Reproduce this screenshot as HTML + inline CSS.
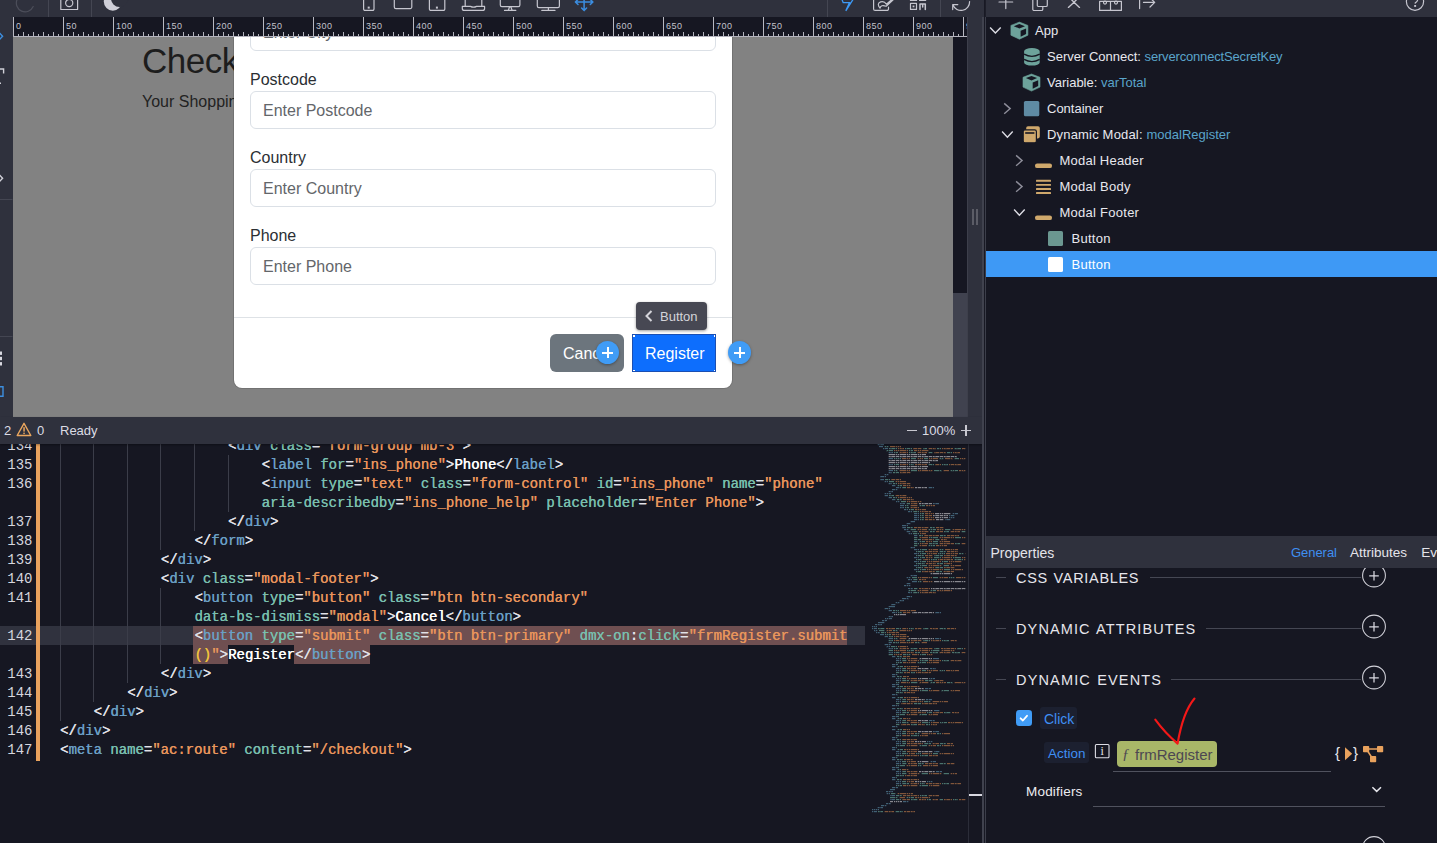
<!DOCTYPE html>
<html lang="en">
<head>
<meta charset="utf-8">
<title>Wappler</title>
<style>
*{box-sizing:border-box;margin:0;padding:0}
html,body{width:1437px;height:843px;overflow:hidden;background:#161722}
body{position:relative;font-family:"Liberation Sans",sans-serif;font-size:13px;color:#e4e4ea}
.abs{position:absolute}
svg{display:block;overflow:visible}
/* top bars */
#tbL{left:0;top:0;width:985px;height:17px;background:#2f313d;overflow:hidden}
#tbR{left:985px;top:0;width:452px;height:17px;background:#2f313d;overflow:hidden}
#strip{left:0;top:17px;width:13px;height:400px;background:#2f313d;overflow:hidden}
#ruler{left:13px;top:17px;width:954px;height:20px;background:#161722;overflow:hidden}
#canvas{left:13px;top:37px;width:940px;height:380px;background:#828282;overflow:hidden}
#vsb{left:953px;top:37px;width:14px;height:380px;background:#161722}
#vsb i{position:absolute;left:0;top:256px;width:14px;height:124px;background:#40424f}
#split{left:967px;top:17px;width:18px;height:426px;background:#2f313d}
#status{left:0;top:417px;width:985px;height:27px;background:#2f313d;z-index:2;box-shadow:0 1px 2px rgba(0,0,0,.35)}
#code{left:0;top:443px;width:985px;height:400px;background:#161722;overflow:hidden}
#panel{background:#161722;overflow:hidden}

/* canvas content */
#canvas .h1{left:129px;top:1.5px;font-size:35px;line-height:44px;color:#1d1d1d;white-space:nowrap;letter-spacing:-.5px}
#canvas .lead{left:129px;top:56px;font-size:16px;line-height:18px;color:#222;white-space:nowrap}
#modal{left:221px;top:-20px;width:498px;height:371px;background:#fff;border-radius:8px;box-shadow:0 0 0 1px rgba(0,0,0,.12)}
#modal .lb{position:absolute;left:16px;font-size:16px;line-height:22px;color:#2b2f33;white-space:nowrap}
#modal .in{position:absolute;left:16px;width:466px;height:38px;border:1px solid #dbe0e6;border-radius:6px;font-size:16px;line-height:38px;padding-left:12px;color:#63666a;white-space:nowrap}
#modal .hr{position:absolute;left:0;top:300px;width:498px;height:1px;background:#dee2e6}
.btn{position:absolute;height:38px;font-size:16px;line-height:39.5px;color:#fff;text-align:left;white-space:nowrap;overflow:hidden}
#bCancel{left:316px;top:317px;width:74px;background:#6c757d;border-radius:6px;padding-left:13px}
#bReg{left:398px;top:317px;width:84px;height:38px;background:#0d6efd;padding-left:13px;line-height:39.5px;box-shadow:0 0 0 1px #1a4fb3 inset}
#bReg i{position:absolute;width:1.5px;height:1.5px;background:#fff}
.plus{position:absolute;width:23px;height:23px;border-radius:50%;background:#409cf6;box-shadow:0 1px 3px rgba(0,0,0,.35)}
.plus:before,.plus:after{content:"";position:absolute;background:#fff}
.plus:before{left:6px;top:10.5px;width:11px;height:2px}
.plus:after{left:10.5px;top:6px;width:2px;height:11px}
#tip{left:402px;top:285px;width:71px;height:28px;border-radius:4px;background:#474853;color:#d4d4da;font-size:13px;line-height:29px;padding-left:24px;box-shadow:0 1px 3px rgba(0,0,0,.4);white-space:nowrap}
#tip svg{position:absolute;left:9px;top:8px}

/* status */
#status{font-size:13px;line-height:28px;color:#dcdce4}
#status span{position:absolute;top:0;white-space:nowrap}
/* code */
#code{font-family:"Liberation Mono",monospace;font-size:14px;line-height:19px;color:#dedee4}
#code .ln{position:absolute;left:0;width:32.5px;text-align:right;color:#d6d6de;white-space:pre;line-height:21px;height:19px}
#code .cl{position:absolute;white-space:pre;height:19px;line-height:21px;letter-spacing:-.03px;text-shadow:.3px 0 0 currentColor}
#code .g{position:absolute;width:1px;height:19px;background:#3b3d49}
#code .obar{position:absolute;left:36px;width:3.5px;background:#e9a25d}
#code .band{position:absolute;left:0;width:865px;height:19px;background:#30323e}
#code .sel{position:absolute;height:19px;background:#6f4f51}
#code .mm{position:absolute;left:870px;top:0}
.p{color:#e2e2e8}.t{color:#6a9fc4}.a{color:#79bfae}.s{color:#e8955c}.x{color:#fff;text-shadow:.5px 0 0 #fff}.y{color:#f0c23c}
#code .vl{position:absolute;top:0;width:1px;height:400px}

/* panel */
#panel{left:986px;top:17px;width:451px;height:826px;border-left:0}
#panel .selrow{position:absolute;left:0;width:451px;height:26px;background:#3e99f5}
#panel .tr{position:absolute;height:26px;line-height:26px;font-size:13px;color:#e8e8ee;white-space:nowrap}
#panel .tr b{font-weight:normal;color:#5aa5cb;letter-spacing:-.15px}
#panel .ph{position:absolute;left:0;width:451px;height:32px;background:#2f313d;font-size:14px;line-height:34px;color:#e4e4ea;z-index:4}
#panel .ph span{position:absolute;top:0;white-space:nowrap}
#panel .ph .tg{font-size:13px;letter-spacing:-.05px}
#panel .ph .ta{font-size:13.5px}
#panel .sh{position:absolute;font-size:14.5px;word-spacing:1px;line-height:20px;height:20px;color:#e6e6ec;white-space:nowrap}
#panel .hl{position:absolute;height:1px;background:#454753}
#panel .bdg{position:absolute;background:#1c2030;border-radius:3px;color:#3f8ff5;white-space:nowrap}
#panel .inf{width:13.6px;height:13.2px;font-family:"Liberation Serif",serif;font-size:12px;line-height:13px;text-align:center;color:#e4e4ea}
#panel .pill{position:absolute;width:100px;height:26px;border-radius:4px;background:#a9b768;color:#4d4752;font-size:15px;line-height:27px;padding-left:18px;white-space:nowrap}
#panel .pill em{position:absolute;left:5px;top:0;font-family:"Liberation Serif",serif;font-style:italic;font-size:15px}
#panel .brc{font-size:15px;line-height:18px;color:#e8e8ee}
#panel .mod{letter-spacing:.2px;font-size:13.5px;line-height:18px;color:#ececf0}
</style>
</head>
<body>
<div id="tbL" class="abs"><svg width="985" height="17" viewBox="0 0 985 17" fill="none" stroke="#c6c6cf" stroke-width="1.2" stroke-linecap="round" stroke-linejoin="round">
<g stroke="#444652" stroke-width="1"><path d="M48.5 0V17M91.5 0V17M827.5 0V17M940.5 0V17"/></g>
<path d="M33.2 6.6A8.6 8.6 0 0 1 17.1 -0.5" stroke="#4c4e5a"/>
<path d="M60.8 0V9.5H77.6V0"/><circle cx="69.2" cy="3" r="3.6"/>
<circle cx="112.8" cy="1.7" r="9" fill="#cfcfd8" stroke="none"/><circle cx="119.6" cy="-1.6" r="8.6" fill="#2f313d" stroke="none"/>
<path d="M363.6 0V9A1.4 1.4 0 0 0 365 10.4H372.6A1.4 1.4 0 0 0 374 9V0"/><rect x="367.7" y="6.6" width="2" height="2" fill="#c6c6cf" stroke="none"/>
<path d="M394.3 0V7A1.6 1.6 0 0 0 395.9 8.6H410.2A1.6 1.6 0 0 0 411.8 7V0"/>
<path d="M429.4 0V9A1.4 1.4 0 0 0 430.8 10.4H443.4A1.4 1.4 0 0 0 444.8 9V0"/><rect x="435.9" y="6.6" width="2" height="2" fill="#c6c6cf" stroke="none"/>
<path d="M465.2 0V6.3M481.8 0V6.3M462.3 6.4H470.5Q473.5 8 476.5 6.4H484.6V8.4A2 2 0 0 1 482.6 10.4H464.3A2 2 0 0 1 462.3 8.4Z"/>
<path d="M500.3 0V5A1.6 1.6 0 0 0 501.9 6.6H518.3A1.6 1.6 0 0 0 519.9 5V0M504.5 10.4H515.8M508.3 10.2L509.6 6.8H510.8L512.1 10.2"/>
<path d="M537.3 0V6A1.6 1.6 0 0 0 538.9 7.6H557.8A1.6 1.6 0 0 0 559.4 6V0M548.4 7.6V10.4M541.8 10.4H555"/>
<g stroke="#3b8de0" stroke-width="1.5"><path d="M575.5 2H592.8M584.1 -4V10.5M578 -0.5L575.4 2L578 4.5M590.3 -0.5L592.9 2L590.3 4.5M581.6 8L584.1 10.6L586.6 8"/></g>
<path d="M841.8 -1L843.2 2.7H849.4L845.8 10.8L853 -0.5" stroke="#3d99f5" stroke-width="1.3" fill="none" stroke-linejoin="miter" stroke-linecap="butt"/>
<path d="M873.6 0V8.9A1.5 1.5 0 0 0 875.1 10.4H887A1.5 1.5 0 0 0 888.5 8.9V7.2M880 8.2Q876.4 3.4 880.6 1.9Q884.3 0.8 886.4 4.2L893 -1.5M880 8.2Q880.8 4.2 886.2 6.2L893.5 -0.5"/>
<rect x="910.5" y="3.4" width="6" height="6"/><rect x="912.6" y="5.5" width="1.8" height="1.8" fill="#c6c6cf" stroke="none"/><path d="M920 9.4V4H925.3V9.4M922.7 4V7" stroke-width="1.5"/><path d="M910.5 -2V0.4H916.5V-2M919.6 -2V0.4H925.6V-2"/>
<path d="M969.6 1.5A8.6 8.6 0 0 1 953 5M952.7 9.6V4.6H957.8"/>
</svg></div>
<div id="tbR" class="abs"><svg width="452" height="17" viewBox="985 0 452 17" fill="none" stroke="#c6c6cf" stroke-width="1.2" stroke-linecap="round" stroke-linejoin="round">
<rect x="984.5" y="0" width="1.5" height="17" fill="#1d1e29" stroke="none"/>
<path d="M999 2H1012.7M1005.8 -3V8.6"/>
<path d="M1037.3 0V5.2A1.3 1.3 0 0 0 1038.6 6.5H1046A1.3 1.3 0 0 0 1047.3 5.2V0M1032.8 0V9.2A1.3 1.3 0 0 0 1034.1 10.5H1041.5A1.3 1.3 0 0 0 1042.8 9.2V6.5"/>
<path d="M1068.4 7.4L1074 2.2L1077.6 -1.5M1079.5 7.4L1074 2.2L1070.4 -1.5" stroke-width="1.35"/>
<path d="M1099.6 1.4H1121.4V10.4H1099.6ZM1110.5 1.4V10.4"/><circle cx="1105" cy="2.6" r="1.5"/><circle cx="1116" cy="2.6" r="1.5"/>
<path d="M1139.6 0V8.6M1143.5 2.4H1154.5M1150 -2.2L1154.7 2.4L1150 7"/>
<circle cx="1415" cy="1.7" r="8.6"/><path d="M1412.6 -1Q1415.5 -3.5 1417.6 -1Q1418.3 0.5 1415.2 3" /><rect x="1414.2" y="5" width="1.9" height="1.9" fill="#c6c6cf" stroke="none"/>
</svg></div>
<div id="strip" class="abs"><svg width="13" height="400" viewBox="0 17 13 400" fill="none" stroke-width="1.4">
<path d="M-1 32.5L2.6 36.2L-1 40" stroke="#3d8fe0"/>
<path d="M-1 69H3.6V73.5" stroke="#d0d0d8"/><path d="M-1 83.2H1" stroke="#d0d0d8"/>
<path d="M-1 174.5L2.6 178.2L-1 182" stroke="#d0d0d8"/>
<path d="M0 199.5H12.5M0 336.5H12.5" stroke="#444652" stroke-width="1"/>
<g fill="#d8d8e0" stroke="none"><rect x="0" y="351.5" width="2" height="3.4"/><rect x="0" y="356.8" width="2" height="3.4"/><rect x="0" y="362.1" width="2" height="3.4"/></g>
<path d="M-1 386.7H3V396.3H-1" stroke="#3d8fe0"/>
</svg></div>
<div id="ruler" class="abs"><svg width="954" height="20" viewBox="0 0 954 20">
<defs><pattern id="tk" x="0" y="0" width="50" height="20" patternUnits="userSpaceOnUse">
<rect x="0" y="0" width="1" height="20" fill="#b9b9c2"/>
<g fill="#b4b4be"><rect x="5" y="17" width="1" height="2"/><rect x="10" y="15" width="1" height="4"/><rect x="15" y="17" width="1" height="2"/><rect x="20" y="15" width="1" height="4"/><rect x="25" y="17" width="1" height="2"/><rect x="30" y="15" width="1" height="4"/><rect x="35" y="17" width="1" height="2"/><rect x="40" y="15" width="1" height="4"/><rect x="45" y="17" width="1" height="2"/></g>
</pattern></defs>
<rect width="954" height="20" fill="url(#tk)"/>
<rect x="0" y="19" width="954" height="1" fill="#b4b4be"/>
<g font-family="Liberation Sans, sans-serif" font-size="9" letter-spacing="0.5" fill="#c2c2cb"><text x="3" y="12">0</text><text x="53" y="12">50</text><text x="103" y="12">100</text><text x="153" y="12">150</text><text x="203" y="12">200</text><text x="253" y="12">250</text><text x="303" y="12">300</text><text x="353" y="12">350</text><text x="403" y="12">400</text><text x="453" y="12">450</text><text x="503" y="12">500</text><text x="553" y="12">550</text><text x="603" y="12">600</text><text x="653" y="12">650</text><text x="703" y="12">700</text><text x="753" y="12">750</text><text x="803" y="12">800</text><text x="853" y="12">850</text><text x="903" y="12">900</text><text x="953" y="12">950</text></g>
</svg></div>
<div id="canvas" class="abs">
<div class="abs h1">Checkout</div>
<div class="abs lead">Your Shopping Cart</div>
<div id="modal" class="abs">
<div class="in" style="top:-4px">Enter City</div>
<div class="lb" style="top:52px">Postcode</div>
<div class="in" style="top:74px">Enter Postcode</div>
<div class="lb" style="top:130px">Country</div>
<div class="in" style="top:152px">Enter Country</div>
<div class="lb" style="top:208px">Phone</div>
<div class="in" style="top:230px">Enter Phone</div>
<div class="hr"></div>
<div id="bCancel" class="btn">Cancel</div>
<div id="bReg" class="btn">Register<i style="left:1px;top:1px"></i><i style="right:1px;top:1px"></i><i style="left:1px;bottom:1px"></i><i style="right:1px;bottom:1px"></i></div>
<div class="plus" style="left:362px;top:324px"></div>
<div id="tip" class="abs"><svg width="8" height="12" viewBox="0 0 8 12"><path d="M6.5 1 L1.5 6 L6.5 11" fill="none" stroke="#d4d4da" stroke-width="2"/></svg>Button</div>
</div>
<div class="plus" style="left:715px;top:304px"></div>
</div>
<div id="vsb" class="abs"><i></i></div>
<div id="split" class="abs"><i class="abs" style="left:5px;top:192px;width:2.2px;height:16px;background:#5b5c66"></i><i class="abs" style="left:9px;top:192px;width:2.2px;height:16px;background:#5b5c66"></i><i class="abs" style="left:0;top:0;width:1px;height:400px;background:#3d3f4b"></i></div>
<i class="abs" style="left:982px;top:17px;width:2px;height:826px;background:#40424e;z-index:5"></i><i class="abs" style="left:984px;top:0;width:1px;height:843px;background:#181924;z-index:5"></i><i class="abs" style="left:985px;top:17px;width:1px;height:826px;background:#3c3e4a;z-index:5"></i>
<div id="status" class="abs"><span style="left:4px">2</span><svg class="abs" style="left:16px;top:5px" width="16" height="15" viewBox="0 0 16 15"><path d="M8 1.3L14.8 13.5H1.2Z" fill="none" stroke="#eaa65e" stroke-width="1.4" stroke-linejoin="round"/><rect x="7.3" y="5.2" width="1.5" height="4.4" fill="#eaa65e"/><rect x="7.3" y="10.6" width="1.5" height="1.5" fill="#eaa65e"/></svg><span style="left:37px">0</span><span style="left:60px">Ready</span>
<span style="left:922px">100%</span><i class="abs" style="left:907px;top:13px;width:10px;height:1.2px;background:#c8c8d0"></i><i class="abs" style="left:961px;top:13px;width:10px;height:1.2px;background:#c8c8d0"></i><i class="abs" style="left:965.4px;top:8px;width:1.2px;height:11px;background:#c8c8d0"></i></div>
<div id="code" class="abs">
<div class="band" style="top:183px"></div>
<div class="sel" style="top:183px;left:193px;width:654.4px"></div>
<div class="sel" style="top:202px;left:193px;width:34.6px"></div>
<div class="sel" style="top:202px;left:294.3px;width:75.8px"></div>
<i class="g" style="left:59.5px;top:-7px"></i>
<i class="g" style="left:93.1px;top:-7px"></i>
<i class="g" style="left:126.7px;top:-7px"></i>
<i class="g" style="left:160.3px;top:-7px"></i>
<i class="g" style="left:193.9px;top:-7px"></i>
<i class="g" style="left:59.5px;top:12px"></i>
<i class="g" style="left:93.1px;top:12px"></i>
<i class="g" style="left:126.7px;top:12px"></i>
<i class="g" style="left:160.3px;top:12px"></i>
<i class="g" style="left:193.9px;top:12px"></i>
<i class="g" style="left:227.5px;top:12px"></i>
<i class="g" style="left:59.5px;top:31px"></i>
<i class="g" style="left:93.1px;top:31px"></i>
<i class="g" style="left:126.7px;top:31px"></i>
<i class="g" style="left:160.3px;top:31px"></i>
<i class="g" style="left:193.9px;top:31px"></i>
<i class="g" style="left:227.5px;top:31px"></i>
<i class="g" style="left:59.5px;top:50px"></i>
<i class="g" style="left:93.1px;top:50px"></i>
<i class="g" style="left:126.7px;top:50px"></i>
<i class="g" style="left:160.3px;top:50px"></i>
<i class="g" style="left:193.9px;top:50px"></i>
<i class="g" style="left:227.5px;top:50px"></i>
<i class="g" style="left:59.5px;top:69px"></i>
<i class="g" style="left:93.1px;top:69px"></i>
<i class="g" style="left:126.7px;top:69px"></i>
<i class="g" style="left:160.3px;top:69px"></i>
<i class="g" style="left:193.9px;top:69px"></i>
<i class="g" style="left:59.5px;top:88px"></i>
<i class="g" style="left:93.1px;top:88px"></i>
<i class="g" style="left:126.7px;top:88px"></i>
<i class="g" style="left:160.3px;top:88px"></i>
<i class="g" style="left:59.5px;top:107px"></i>
<i class="g" style="left:93.1px;top:107px"></i>
<i class="g" style="left:126.7px;top:107px"></i>
<i class="g" style="left:59.5px;top:126px"></i>
<i class="g" style="left:93.1px;top:126px"></i>
<i class="g" style="left:126.7px;top:126px"></i>
<i class="g" style="left:59.5px;top:145px"></i>
<i class="g" style="left:93.1px;top:145px"></i>
<i class="g" style="left:126.7px;top:145px"></i>
<i class="g" style="left:160.3px;top:145px"></i>
<i class="g" style="left:59.5px;top:164px"></i>
<i class="g" style="left:93.1px;top:164px"></i>
<i class="g" style="left:126.7px;top:164px"></i>
<i class="g" style="left:160.3px;top:164px"></i>
<i class="g" style="left:59.5px;top:183px"></i>
<i class="g" style="left:93.1px;top:183px"></i>
<i class="g" style="left:126.7px;top:183px"></i>
<i class="g" style="left:160.3px;top:183px"></i>
<i class="g" style="left:59.5px;top:202px"></i>
<i class="g" style="left:93.1px;top:202px"></i>
<i class="g" style="left:126.7px;top:202px"></i>
<i class="g" style="left:160.3px;top:202px"></i>
<i class="g" style="left:59.5px;top:221px"></i>
<i class="g" style="left:93.1px;top:221px"></i>
<i class="g" style="left:126.7px;top:221px"></i>
<i class="g" style="left:59.5px;top:240px"></i>
<i class="g" style="left:93.1px;top:240px"></i>
<i class="g" style="left:59.5px;top:259px"></i>
<div class="obar" style="top:0;height:318px"></div>
<div class="ln" style="top:-7px">134</div>
<div class="cl" style="top:-7px;left:228.0px"><span class="p">&lt;</span><span class="t">div</span> <span class="a">class</span><span class="p">=</span><span class="s">"form-group mb-3"</span><span class="p">&gt;</span></div>
<div class="ln" style="top:12px">135</div>
<div class="cl" style="top:12px;left:261.6px"><span class="p">&lt;</span><span class="t">label</span> <span class="a">for</span><span class="p">=</span><span class="s">"ins_phone"</span><span class="p">&gt;</span><span class="x">Phone</span><span class="p">&lt;/</span><span class="t">label</span><span class="p">&gt;</span></div>
<div class="ln" style="top:31px">136</div>
<div class="cl" style="top:31px;left:261.6px"><span class="p">&lt;</span><span class="t">input</span> <span class="a">type</span><span class="p">=</span><span class="s">"text"</span> <span class="a">class</span><span class="p">=</span><span class="s">"form-control"</span> <span class="a">id</span><span class="p">=</span><span class="s">"ins_phone"</span> <span class="a">name</span><span class="p">=</span><span class="s">"phone"</span></div>
<div class="cl" style="top:50px;left:261.6px"><span class="a">aria-describedby</span><span class="p">=</span><span class="s">"ins_phone_help"</span> <span class="a">placeholder</span><span class="p">=</span><span class="s">"Enter Phone"</span><span class="p">&gt;</span></div>
<div class="ln" style="top:69px">137</div>
<div class="cl" style="top:69px;left:228.0px"><span class="p">&lt;/</span><span class="t">div</span><span class="p">&gt;</span></div>
<div class="ln" style="top:88px">138</div>
<div class="cl" style="top:88px;left:194.4px"><span class="p">&lt;/</span><span class="t">form</span><span class="p">&gt;</span></div>
<div class="ln" style="top:107px">139</div>
<div class="cl" style="top:107px;left:160.8px"><span class="p">&lt;/</span><span class="t">div</span><span class="p">&gt;</span></div>
<div class="ln" style="top:126px">140</div>
<div class="cl" style="top:126px;left:160.8px"><span class="p">&lt;</span><span class="t">div</span> <span class="a">class</span><span class="p">=</span><span class="s">"modal-footer"</span><span class="p">&gt;</span></div>
<div class="ln" style="top:145px">141</div>
<div class="cl" style="top:145px;left:194.4px"><span class="p">&lt;</span><span class="t">button</span> <span class="a">type</span><span class="p">=</span><span class="s">"button"</span> <span class="a">class</span><span class="p">=</span><span class="s">"btn btn-secondary"</span></div>
<div class="cl" style="top:164px;left:194.4px"><span class="a">data-bs-dismiss</span><span class="p">=</span><span class="s">"modal"</span><span class="p">&gt;</span><span class="x">Cancel</span><span class="p">&lt;/</span><span class="t">button</span><span class="p">&gt;</span></div>
<div class="ln" style="top:183px">142</div>
<div class="cl" style="top:183px;left:194.4px"><span class="p">&lt;</span><span class="t">button</span> <span class="a">type</span><span class="p">=</span><span class="s">"submit"</span> <span class="a">class</span><span class="p">=</span><span class="s">"btn btn-primary"</span> <span class="a">dmx-on</span><span class="p">:</span><span class="a">click</span><span class="p">=</span><span class="s">"frmRegister.submit</span></div>
<div class="cl" style="top:202px;left:194.4px"><span class="y">()</span><span class="s">"</span><span class="p">&gt;</span><span class="x">Register</span><span class="p">&lt;/</span><span class="t">button</span><span class="p">&gt;</span></div>
<div class="ln" style="top:221px">143</div>
<div class="cl" style="top:221px;left:160.8px"><span class="p">&lt;/</span><span class="t">div</span><span class="p">&gt;</span></div>
<div class="ln" style="top:240px">144</div>
<div class="cl" style="top:240px;left:127.2px"><span class="p">&lt;/</span><span class="t">div</span><span class="p">&gt;</span></div>
<div class="ln" style="top:259px">145</div>
<div class="cl" style="top:259px;left:93.6px"><span class="p">&lt;/</span><span class="t">div</span><span class="p">&gt;</span></div>
<div class="ln" style="top:278px">146</div>
<div class="cl" style="top:278px;left:60.0px"><span class="p">&lt;/</span><span class="t">div</span><span class="p">&gt;</span></div>
<div class="ln" style="top:297px">147</div>
<div class="cl" style="top:297px;left:60.0px"><span class="p">&lt;</span><span class="t">meta</span> <span class="a">name</span><span class="p">=</span><span class="s">"ac:route"</span> <span class="a">content</span><span class="p">=</span><span class="s">"/checkout"</span><span class="p">&gt;</span></div>
<svg class="mm" width="98" height="400" viewBox="0 0 98 400" opacity="0.6"><defs><pattern id="mk" width="11" height="4" patternUnits="userSpaceOnUse"><rect width="11" height="4" fill="#fff"/><rect x="3" width="1" height="4" fill="#555"/><rect x="7" width="1" height="4" fill="#555"/><rect x="5" y="2" width="1" height="2" fill="#555"/><rect x="9.5" y="0" width="1" height="2" fill="#555"/></pattern><mask id="mkm"><rect width="98" height="400" fill="url(#mk)"/></mask></defs><g mask="url(#mkm)"><rect x="7" y="1" width="7" height="1.2" fill="#5f93ad"/><rect x="9" y="3" width="4" height="1.2" fill="#5f93ad"/><rect x="14" y="3" width="5" height="1.2" fill="#6fb3a0"/><rect x="20" y="3" width="11" height="1.2" fill="#c8814a"/><rect x="13" y="5" width="5" height="1.2" fill="#5f93ad"/><rect x="19" y="5" width="8" height="1.2" fill="#6fb3a0"/><rect x="28" y="5" width="6" height="1.2" fill="#c8814a"/><rect x="35" y="5" width="7" height="1.2" fill="#6fb3a0"/><rect x="43" y="5" width="9" height="1.2" fill="#c8814a"/><rect x="53" y="5" width="4" height="1.2" fill="#6fb3a0"/><rect x="58" y="5" width="8" height="1.2" fill="#c8814a"/><rect x="67" y="5" width="4" height="1.2" fill="#6fb3a0"/><rect x="72" y="5" width="11" height="1.2" fill="#c8814a"/><rect x="84" y="5" width="7" height="1.2" fill="#6fb3a0"/><rect x="92" y="5" width="4" height="1.2" fill="#c8814a"/><rect x="16" y="7" width="7" height="1.2" fill="#6fb3a0"/><rect x="24" y="7" width="14" height="1.2" fill="#c8814a"/><rect x="39" y="7" width="4" height="1.2" fill="#6fb3a0"/><rect x="44" y="7" width="15" height="1.2" fill="#c8814a"/><rect x="18" y="9" width="5" height="1.2" fill="#5f93ad"/><rect x="24" y="9" width="4" height="1.2" fill="#6fb3a0"/><rect x="29" y="9" width="9" height="1.2" fill="#c8814a"/><rect x="39" y="9" width="7" height="1.2" fill="#6fb3a0"/><rect x="47" y="9" width="10" height="1.2" fill="#c8814a"/><rect x="58" y="9" width="5" height="1.2" fill="#6fb3a0"/><rect x="64" y="9" width="12" height="1.2" fill="#c8814a"/><rect x="77" y="9" width="5" height="1.2" fill="#6fb3a0"/><rect x="83" y="9" width="7" height="1.2" fill="#c8814a"/><rect x="18" y="11" width="38" height="1.2" fill="#d6d6da"/><rect x="18" y="13" width="69" height="1.2" fill="#d6d6da"/><rect x="18" y="15" width="5" height="1.2" fill="#5f93ad"/><rect x="24" y="15" width="7" height="1.2" fill="#6fb3a0"/><rect x="32" y="15" width="8" height="1.2" fill="#c8814a"/><rect x="41" y="15" width="5" height="1.2" fill="#6fb3a0"/><rect x="47" y="15" width="6" height="1.2" fill="#c8814a"/><rect x="54" y="15" width="4" height="1.2" fill="#6fb3a0"/><rect x="59" y="15" width="9" height="1.2" fill="#c8814a"/><rect x="69" y="15" width="5" height="1.2" fill="#6fb3a0"/><rect x="75" y="15" width="8" height="1.2" fill="#c8814a"/><rect x="84" y="15" width="5" height="1.2" fill="#6fb3a0"/><rect x="90" y="15" width="6" height="1.2" fill="#c8814a"/><rect x="18" y="17" width="50" height="1.2" fill="#d6d6da"/><rect x="18" y="19" width="42" height="1.2" fill="#d6d6da"/><rect x="18" y="21" width="5" height="1.2" fill="#5f93ad"/><rect x="24" y="21" width="5" height="1.2" fill="#6fb3a0"/><rect x="30" y="21" width="8" height="1.2" fill="#c8814a"/><rect x="39" y="21" width="5" height="1.2" fill="#6fb3a0"/><rect x="45" y="21" width="12" height="1.2" fill="#c8814a"/><rect x="58" y="21" width="6" height="1.2" fill="#6fb3a0"/><rect x="65" y="21" width="6" height="1.2" fill="#c8814a"/><rect x="72" y="21" width="6" height="1.2" fill="#6fb3a0"/><rect x="79" y="21" width="12" height="1.2" fill="#c8814a"/><rect x="18" y="23" width="40" height="1.2" fill="#d6d6da"/><rect x="18" y="25" width="39" height="1.2" fill="#d6d6da"/><rect x="18" y="27" width="5" height="1.2" fill="#5f93ad"/><rect x="24" y="27" width="4" height="1.2" fill="#6fb3a0"/><rect x="29" y="27" width="11" height="1.2" fill="#c8814a"/><rect x="41" y="27" width="6" height="1.2" fill="#6fb3a0"/><rect x="48" y="27" width="15" height="1.2" fill="#c8814a"/><rect x="64" y="27" width="8" height="1.2" fill="#6fb3a0"/><rect x="73" y="27" width="6" height="1.2" fill="#c8814a"/><rect x="80" y="27" width="8" height="1.2" fill="#6fb3a0"/><rect x="89" y="27" width="7" height="1.2" fill="#c8814a"/><rect x="18" y="29" width="4" height="1.2" fill="#5f93ad"/><rect x="23" y="29" width="6" height="1.2" fill="#6fb3a0"/><rect x="30" y="29" width="11" height="1.2" fill="#c8814a"/><rect x="14" y="31" width="5" height="1.2" fill="#5f93ad"/><rect x="10" y="33" width="6" height="1.2" fill="#5f93ad"/><rect x="10" y="36" width="4" height="1.2" fill="#5f93ad"/><rect x="15" y="36" width="5" height="1.2" fill="#6fb3a0"/><rect x="21" y="36" width="10" height="1.2" fill="#c8814a"/><rect x="14" y="38" width="4" height="1.2" fill="#5f93ad"/><rect x="19" y="38" width="5" height="1.2" fill="#6fb3a0"/><rect x="25" y="38" width="11" height="1.2" fill="#c8814a"/><rect x="18" y="40" width="4" height="1.2" fill="#5f93ad"/><rect x="23" y="40" width="4" height="1.2" fill="#6fb3a0"/><rect x="28" y="40" width="13" height="1.2" fill="#c8814a"/><rect x="22" y="42" width="4" height="1.2" fill="#5f93ad"/><rect x="27" y="42" width="5" height="1.2" fill="#6fb3a0"/><rect x="33" y="42" width="8" height="1.2" fill="#c8814a"/><rect x="26" y="44" width="5" height="1.2" fill="#5f93ad"/><rect x="32" y="44" width="4" height="1.2" fill="#6fb3a0"/><rect x="37" y="44" width="7" height="1.2" fill="#c8814a"/><rect x="45" y="44" width="12" height="1.2" fill="#d6d6da"/><rect x="58" y="44" width="6" height="1.2" fill="#5f93ad"/><rect x="22" y="46" width="6" height="1.2" fill="#5f93ad"/><rect x="18" y="48" width="5" height="1.2" fill="#5f93ad"/><rect x="14" y="50" width="7" height="1.2" fill="#5f93ad"/><rect x="14" y="52" width="4" height="1.2" fill="#5f93ad"/><rect x="19" y="52" width="5" height="1.2" fill="#6fb3a0"/><rect x="25" y="52" width="12" height="1.2" fill="#c8814a"/><rect x="18" y="54" width="4" height="1.2" fill="#5f93ad"/><rect x="23" y="54" width="4" height="1.2" fill="#6fb3a0"/><rect x="28" y="54" width="14" height="1.2" fill="#c8814a"/><rect x="22" y="56" width="4" height="1.2" fill="#5f93ad"/><rect x="27" y="56" width="5" height="1.2" fill="#6fb3a0"/><rect x="33" y="56" width="11" height="1.2" fill="#c8814a"/><rect x="26" y="58" width="4" height="1.2" fill="#5f93ad"/><rect x="31" y="58" width="5" height="1.2" fill="#6fb3a0"/><rect x="37" y="58" width="15" height="1.2" fill="#c8814a"/><rect x="30" y="60" width="5" height="1.2" fill="#5f93ad"/><rect x="36" y="60" width="4" height="1.2" fill="#6fb3a0"/><rect x="41" y="60" width="7" height="1.2" fill="#c8814a"/><rect x="49" y="60" width="13" height="1.2" fill="#d6d6da"/><rect x="63" y="60" width="6" height="1.2" fill="#5f93ad"/><rect x="30" y="62" width="4" height="1.2" fill="#5f93ad"/><rect x="35" y="62" width="4" height="1.2" fill="#6fb3a0"/><rect x="40" y="62" width="8" height="1.2" fill="#c8814a"/><rect x="49" y="62" width="6" height="1.2" fill="#6fb3a0"/><rect x="56" y="62" width="9" height="1.2" fill="#c8814a"/><rect x="30" y="64" width="4" height="1.2" fill="#5f93ad"/><rect x="35" y="64" width="4" height="1.2" fill="#6fb3a0"/><rect x="40" y="64" width="9" height="1.2" fill="#c8814a"/><rect x="34" y="66" width="4" height="1.2" fill="#5f93ad"/><rect x="39" y="66" width="5" height="1.2" fill="#6fb3a0"/><rect x="45" y="66" width="11" height="1.2" fill="#c8814a"/><rect x="38" y="68" width="4" height="1.2" fill="#5f93ad"/><rect x="43" y="68" width="6" height="1.2" fill="#6fb3a0"/><rect x="50" y="68" width="11" height="1.2" fill="#c8814a"/><rect x="44" y="70" width="5" height="1.2" fill="#5f93ad"/><rect x="50" y="70" width="4" height="1.2" fill="#6fb3a0"/><rect x="55" y="70" width="9" height="1.2" fill="#c8814a"/><rect x="65" y="70" width="16" height="1.2" fill="#d6d6da"/><rect x="82" y="70" width="6" height="1.2" fill="#5f93ad"/><rect x="44" y="72" width="5" height="1.2" fill="#5f93ad"/><rect x="50" y="72" width="4" height="1.2" fill="#6fb3a0"/><rect x="55" y="72" width="7" height="1.2" fill="#c8814a"/><rect x="63" y="72" width="15" height="1.2" fill="#d6d6da"/><rect x="79" y="72" width="6" height="1.2" fill="#5f93ad"/><rect x="44" y="74" width="5" height="1.2" fill="#5f93ad"/><rect x="50" y="74" width="4" height="1.2" fill="#6fb3a0"/><rect x="55" y="74" width="9" height="1.2" fill="#c8814a"/><rect x="65" y="74" width="13" height="1.2" fill="#d6d6da"/><rect x="79" y="74" width="6" height="1.2" fill="#5f93ad"/><rect x="44" y="76" width="5" height="1.2" fill="#5f93ad"/><rect x="50" y="76" width="4" height="1.2" fill="#6fb3a0"/><rect x="55" y="76" width="10" height="1.2" fill="#c8814a"/><rect x="66" y="76" width="8" height="1.2" fill="#d6d6da"/><rect x="75" y="76" width="6" height="1.2" fill="#5f93ad"/><rect x="40" y="78" width="5" height="1.2" fill="#5f93ad"/><rect x="36" y="80" width="5" height="1.2" fill="#5f93ad"/><rect x="32" y="82" width="6" height="1.2" fill="#5f93ad"/><rect x="32" y="84" width="4" height="1.2" fill="#5f93ad"/><rect x="37" y="84" width="6" height="1.2" fill="#6fb3a0"/><rect x="44" y="84" width="15" height="1.2" fill="#c8814a"/><rect x="60" y="84" width="5" height="1.2" fill="#6fb3a0"/><rect x="66" y="84" width="8" height="1.2" fill="#c8814a"/><rect x="34" y="86" width="5" height="1.2" fill="#5f93ad"/><rect x="40" y="86" width="6" height="1.2" fill="#6fb3a0"/><rect x="47" y="86" width="10" height="1.2" fill="#c8814a"/><rect x="58" y="86" width="8" height="1.2" fill="#6fb3a0"/><rect x="67" y="86" width="7" height="1.2" fill="#c8814a"/><rect x="75" y="86" width="6" height="1.2" fill="#6fb3a0"/><rect x="82" y="86" width="14" height="1.2" fill="#c8814a"/><rect x="36" y="88" width="5" height="1.2" fill="#5f93ad"/><rect x="42" y="88" width="6" height="1.2" fill="#6fb3a0"/><rect x="49" y="88" width="10" height="1.2" fill="#c8814a"/><rect x="60" y="88" width="5" height="1.2" fill="#6fb3a0"/><rect x="66" y="88" width="7" height="1.2" fill="#c8814a"/><rect x="74" y="88" width="5" height="1.2" fill="#6fb3a0"/><rect x="80" y="88" width="10" height="1.2" fill="#c8814a"/><rect x="91" y="88" width="5" height="1.2" fill="#6fb3a0"/><rect x="38" y="90" width="4" height="1.2" fill="#5f93ad"/><rect x="43" y="90" width="6" height="1.2" fill="#6fb3a0"/><rect x="50" y="90" width="6" height="1.2" fill="#c8814a"/><rect x="44" y="92" width="4" height="1.2" fill="#5f93ad"/><rect x="49" y="92" width="4" height="1.2" fill="#6fb3a0"/><rect x="54" y="92" width="15" height="1.2" fill="#c8814a"/><rect x="70" y="92" width="6" height="1.2" fill="#6fb3a0"/><rect x="77" y="92" width="12" height="1.2" fill="#c8814a"/><rect x="44" y="94" width="4" height="1.2" fill="#6fb3a0"/><rect x="49" y="94" width="9" height="1.2" fill="#c8814a"/><rect x="59" y="94" width="9" height="1.2" fill="#6fb3a0"/><rect x="69" y="94" width="15" height="1.2" fill="#c8814a"/><rect x="85" y="94" width="6" height="1.2" fill="#6fb3a0"/><rect x="92" y="94" width="4" height="1.2" fill="#c8814a"/><rect x="44" y="96" width="7" height="1.2" fill="#6fb3a0"/><rect x="52" y="96" width="12" height="1.2" fill="#c8814a"/><rect x="65" y="96" width="5" height="1.2" fill="#6fb3a0"/><rect x="71" y="96" width="6" height="1.2" fill="#c8814a"/><rect x="44" y="98" width="4" height="1.2" fill="#5f93ad"/><rect x="49" y="98" width="6" height="1.2" fill="#6fb3a0"/><rect x="56" y="98" width="6" height="1.2" fill="#c8814a"/><rect x="63" y="98" width="5" height="1.2" fill="#6fb3a0"/><rect x="69" y="98" width="11" height="1.2" fill="#c8814a"/><rect x="44" y="100" width="5" height="1.2" fill="#6fb3a0"/><rect x="50" y="100" width="8" height="1.2" fill="#c8814a"/><rect x="59" y="100" width="9" height="1.2" fill="#6fb3a0"/><rect x="69" y="100" width="15" height="1.2" fill="#c8814a"/><rect x="85" y="100" width="5" height="1.2" fill="#6fb3a0"/><rect x="91" y="100" width="5" height="1.2" fill="#c8814a"/><rect x="44" y="102" width="4" height="1.2" fill="#6fb3a0"/><rect x="49" y="102" width="8" height="1.2" fill="#c8814a"/><rect x="58" y="102" width="7" height="1.2" fill="#6fb3a0"/><rect x="66" y="102" width="11" height="1.2" fill="#c8814a"/><rect x="40" y="104" width="5" height="1.2" fill="#5f93ad"/><rect x="44" y="106" width="5" height="1.2" fill="#5f93ad"/><rect x="50" y="106" width="7" height="1.2" fill="#6fb3a0"/><rect x="58" y="106" width="10" height="1.2" fill="#c8814a"/><rect x="69" y="106" width="5" height="1.2" fill="#6fb3a0"/><rect x="75" y="106" width="13" height="1.2" fill="#c8814a"/><rect x="46" y="108" width="8" height="1.2" fill="#6fb3a0"/><rect x="55" y="108" width="13" height="1.2" fill="#c8814a"/><rect x="69" y="108" width="7" height="1.2" fill="#6fb3a0"/><rect x="77" y="108" width="11" height="1.2" fill="#c8814a"/><rect x="44" y="110" width="5" height="1.2" fill="#5f93ad"/><rect x="50" y="110" width="6" height="1.2" fill="#6fb3a0"/><rect x="57" y="110" width="10" height="1.2" fill="#c8814a"/><rect x="68" y="110" width="7" height="1.2" fill="#6fb3a0"/><rect x="76" y="110" width="12" height="1.2" fill="#c8814a"/><rect x="89" y="110" width="5" height="1.2" fill="#6fb3a0"/><rect x="95" y="110" width="1" height="1.2" fill="#c8814a"/><rect x="46" y="112" width="8" height="1.2" fill="#6fb3a0"/><rect x="55" y="112" width="8" height="1.2" fill="#c8814a"/><rect x="64" y="112" width="9" height="1.2" fill="#6fb3a0"/><rect x="74" y="112" width="13" height="1.2" fill="#c8814a"/><rect x="44" y="114" width="5" height="1.2" fill="#5f93ad"/><rect x="50" y="114" width="5" height="1.2" fill="#6fb3a0"/><rect x="56" y="114" width="7" height="1.2" fill="#c8814a"/><rect x="64" y="114" width="7" height="1.2" fill="#6fb3a0"/><rect x="72" y="114" width="10" height="1.2" fill="#c8814a"/><rect x="83" y="114" width="8" height="1.2" fill="#6fb3a0"/><rect x="92" y="114" width="4" height="1.2" fill="#c8814a"/><rect x="46" y="116" width="6" height="1.2" fill="#6fb3a0"/><rect x="53" y="116" width="7" height="1.2" fill="#c8814a"/><rect x="61" y="116" width="6" height="1.2" fill="#6fb3a0"/><rect x="68" y="116" width="15" height="1.2" fill="#c8814a"/><rect x="84" y="116" width="9" height="1.2" fill="#6fb3a0"/><rect x="94" y="116" width="2" height="1.2" fill="#c8814a"/><rect x="44" y="118" width="5" height="1.2" fill="#5f93ad"/><rect x="50" y="118" width="6" height="1.2" fill="#6fb3a0"/><rect x="57" y="118" width="14" height="1.2" fill="#c8814a"/><rect x="72" y="118" width="6" height="1.2" fill="#6fb3a0"/><rect x="79" y="118" width="13" height="1.2" fill="#c8814a"/><rect x="46" y="120" width="9" height="1.2" fill="#6fb3a0"/><rect x="56" y="120" width="10" height="1.2" fill="#c8814a"/><rect x="67" y="120" width="6" height="1.2" fill="#6fb3a0"/><rect x="74" y="120" width="8" height="1.2" fill="#c8814a"/><rect x="44" y="122" width="5" height="1.2" fill="#5f93ad"/><rect x="50" y="122" width="7" height="1.2" fill="#6fb3a0"/><rect x="58" y="122" width="14" height="1.2" fill="#c8814a"/><rect x="73" y="122" width="6" height="1.2" fill="#6fb3a0"/><rect x="80" y="122" width="11" height="1.2" fill="#c8814a"/><rect x="46" y="124" width="7" height="1.2" fill="#6fb3a0"/><rect x="54" y="124" width="10" height="1.2" fill="#c8814a"/><rect x="65" y="124" width="8" height="1.2" fill="#6fb3a0"/><rect x="74" y="124" width="11" height="1.2" fill="#c8814a"/><rect x="44" y="126" width="5" height="1.2" fill="#5f93ad"/><rect x="50" y="126" width="6" height="1.2" fill="#6fb3a0"/><rect x="57" y="126" width="16" height="1.2" fill="#c8814a"/><rect x="74" y="126" width="6" height="1.2" fill="#6fb3a0"/><rect x="81" y="126" width="12" height="1.2" fill="#c8814a"/><rect x="46" y="128" width="5" height="1.2" fill="#6fb3a0"/><rect x="52" y="128" width="13" height="1.2" fill="#c8814a"/><rect x="66" y="128" width="6" height="1.2" fill="#6fb3a0"/><rect x="73" y="128" width="11" height="1.2" fill="#c8814a"/><rect x="60" y="130" width="22" height="1.2" fill="#d6d6da"/><rect x="40" y="132" width="7" height="1.2" fill="#5f93ad"/><rect x="36" y="134" width="5" height="1.2" fill="#5f93ad"/><rect x="42" y="134" width="5" height="1.2" fill="#6fb3a0"/><rect x="48" y="134" width="14" height="1.2" fill="#c8814a"/><rect x="63" y="134" width="5" height="1.2" fill="#6fb3a0"/><rect x="69" y="134" width="9" height="1.2" fill="#c8814a"/><rect x="79" y="134" width="6" height="1.2" fill="#6fb3a0"/><rect x="86" y="134" width="10" height="1.2" fill="#c8814a"/><rect x="38" y="136" width="4" height="1.2" fill="#5f93ad"/><rect x="43" y="136" width="5" height="1.2" fill="#6fb3a0"/><rect x="49" y="136" width="7" height="1.2" fill="#c8814a"/><rect x="42" y="138" width="5" height="1.2" fill="#5f93ad"/><rect x="48" y="138" width="4" height="1.2" fill="#6fb3a0"/><rect x="53" y="138" width="10" height="1.2" fill="#c8814a"/><rect x="64" y="138" width="32" height="1.2" fill="#d6d6da"/><rect x="36" y="140" width="5" height="1.2" fill="#5f93ad"/><rect x="34" y="142" width="7" height="1.2" fill="#5f93ad"/><rect x="38" y="145" width="5" height="1.2" fill="#5f93ad"/><rect x="44" y="145" width="4" height="1.2" fill="#6fb3a0"/><rect x="49" y="145" width="11" height="1.2" fill="#c8814a"/><rect x="61" y="145" width="35" height="1.2" fill="#d6d6da"/><rect x="38" y="147" width="8" height="1.2" fill="#6fb3a0"/><rect x="47" y="147" width="12" height="1.2" fill="#c8814a"/><rect x="60" y="147" width="6" height="1.2" fill="#6fb3a0"/><rect x="67" y="147" width="15" height="1.2" fill="#c8814a"/><rect x="38" y="149" width="4" height="1.2" fill="#5f93ad"/><rect x="43" y="149" width="6" height="1.2" fill="#6fb3a0"/><rect x="50" y="149" width="16" height="1.2" fill="#c8814a"/><rect x="36" y="153" width="6" height="1.2" fill="#5f93ad"/><rect x="32" y="155" width="7" height="1.2" fill="#5f93ad"/><rect x="29" y="157" width="5" height="1.2" fill="#5f93ad"/><rect x="25" y="159" width="5" height="1.2" fill="#5f93ad"/><rect x="21" y="161" width="5" height="1.2" fill="#5f93ad"/><rect x="18" y="163" width="7" height="1.2" fill="#5f93ad"/><rect x="14" y="165" width="6" height="1.2" fill="#5f93ad"/><rect x="18" y="167" width="4" height="1.2" fill="#5f93ad"/><rect x="23" y="167" width="6" height="1.2" fill="#6fb3a0"/><rect x="30" y="167" width="16" height="1.2" fill="#c8814a"/><rect x="22" y="169" width="5" height="1.2" fill="#5f93ad"/><rect x="28" y="169" width="4" height="1.2" fill="#6fb3a0"/><rect x="33" y="169" width="8" height="1.2" fill="#c8814a"/><rect x="42" y="169" width="22" height="1.2" fill="#d6d6da"/><rect x="65" y="169" width="6" height="1.2" fill="#5f93ad"/><rect x="24" y="171" width="12" height="1.2" fill="#d6d6da"/><rect x="18" y="173" width="5" height="1.2" fill="#5f93ad"/><rect x="15" y="175" width="7" height="1.2" fill="#5f93ad"/><rect x="12" y="177" width="5" height="1.2" fill="#5f93ad"/><rect x="8" y="179" width="7" height="1.2" fill="#5f93ad"/><rect x="5" y="181" width="7" height="1.2" fill="#5f93ad"/><rect x="2" y="183" width="5" height="1.2" fill="#5f93ad"/><rect x="2" y="185" width="5" height="1.2" fill="#5f93ad"/><rect x="8" y="185" width="7" height="1.2" fill="#6fb3a0"/><rect x="16" y="185" width="9" height="1.2" fill="#c8814a"/><rect x="26" y="185" width="5" height="1.2" fill="#6fb3a0"/><rect x="32" y="185" width="6" height="1.2" fill="#c8814a"/><rect x="39" y="185" width="5" height="1.2" fill="#6fb3a0"/><rect x="45" y="185" width="7" height="1.2" fill="#c8814a"/><rect x="53" y="185" width="6" height="1.2" fill="#6fb3a0"/><rect x="60" y="185" width="8" height="1.2" fill="#c8814a"/><rect x="69" y="185" width="7" height="1.2" fill="#6fb3a0"/><rect x="77" y="185" width="9" height="1.2" fill="#c8814a"/><rect x="4" y="187" width="4" height="1.2" fill="#5f93ad"/><rect x="9" y="187" width="6" height="1.2" fill="#6fb3a0"/><rect x="16" y="187" width="6" height="1.2" fill="#c8814a"/><rect x="23" y="187" width="5" height="1.2" fill="#6fb3a0"/><rect x="29" y="187" width="13" height="1.2" fill="#c8814a"/><rect x="6" y="189" width="4" height="1.2" fill="#5f93ad"/><rect x="11" y="189" width="5" height="1.2" fill="#6fb3a0"/><rect x="17" y="189" width="12" height="1.2" fill="#c8814a"/><rect x="10" y="191" width="4" height="1.2" fill="#5f93ad"/><rect x="15" y="191" width="6" height="1.2" fill="#6fb3a0"/><rect x="22" y="191" width="15" height="1.2" fill="#c8814a"/><rect x="14" y="193" width="4" height="1.2" fill="#5f93ad"/><rect x="19" y="193" width="4" height="1.2" fill="#6fb3a0"/><rect x="24" y="193" width="15" height="1.2" fill="#c8814a"/><rect x="18" y="195" width="5" height="1.2" fill="#5f93ad"/><rect x="24" y="195" width="4" height="1.2" fill="#6fb3a0"/><rect x="29" y="195" width="8" height="1.2" fill="#c8814a"/><rect x="38" y="195" width="26" height="1.2" fill="#d6d6da"/><rect x="65" y="195" width="6" height="1.2" fill="#5f93ad"/><rect x="18" y="197" width="5" height="1.2" fill="#6fb3a0"/><rect x="24" y="197" width="11" height="1.2" fill="#c8814a"/><rect x="36" y="197" width="4" height="1.2" fill="#6fb3a0"/><rect x="41" y="197" width="11" height="1.2" fill="#c8814a"/><rect x="53" y="197" width="7" height="1.2" fill="#6fb3a0"/><rect x="61" y="197" width="10" height="1.2" fill="#c8814a"/><rect x="72" y="197" width="7" height="1.2" fill="#6fb3a0"/><rect x="80" y="197" width="7" height="1.2" fill="#c8814a"/><rect x="18" y="199" width="4" height="1.2" fill="#5f93ad"/><rect x="23" y="199" width="6" height="1.2" fill="#6fb3a0"/><rect x="30" y="199" width="14" height="1.2" fill="#c8814a"/><rect x="45" y="199" width="5" height="1.2" fill="#6fb3a0"/><rect x="51" y="199" width="6" height="1.2" fill="#c8814a"/><rect x="14" y="201" width="7" height="1.2" fill="#5f93ad"/><rect x="16" y="203" width="4" height="1.2" fill="#5f93ad"/><rect x="21" y="203" width="6" height="1.2" fill="#6fb3a0"/><rect x="28" y="203" width="10" height="1.2" fill="#c8814a"/><rect x="18" y="205" width="5" height="1.2" fill="#5f93ad"/><rect x="24" y="205" width="4" height="1.2" fill="#6fb3a0"/><rect x="29" y="205" width="10" height="1.2" fill="#c8814a"/><rect x="40" y="205" width="8" height="1.2" fill="#6fb3a0"/><rect x="49" y="205" width="14" height="1.2" fill="#c8814a"/><rect x="64" y="205" width="6" height="1.2" fill="#6fb3a0"/><rect x="71" y="205" width="15" height="1.2" fill="#c8814a"/><rect x="87" y="205" width="6" height="1.2" fill="#6fb3a0"/><rect x="94" y="205" width="2" height="1.2" fill="#c8814a"/><rect x="18" y="207" width="5" height="1.2" fill="#6fb3a0"/><rect x="24" y="207" width="12" height="1.2" fill="#c8814a"/><rect x="37" y="207" width="7" height="1.2" fill="#6fb3a0"/><rect x="45" y="207" width="15" height="1.2" fill="#c8814a"/><rect x="61" y="207" width="9" height="1.2" fill="#6fb3a0"/><rect x="71" y="207" width="14" height="1.2" fill="#c8814a"/><rect x="18" y="209" width="5" height="1.2" fill="#5f93ad"/><rect x="24" y="209" width="6" height="1.2" fill="#6fb3a0"/><rect x="31" y="209" width="13" height="1.2" fill="#c8814a"/><rect x="45" y="209" width="5" height="1.2" fill="#6fb3a0"/><rect x="51" y="209" width="8" height="1.2" fill="#c8814a"/><rect x="60" y="209" width="8" height="1.2" fill="#6fb3a0"/><rect x="69" y="209" width="12" height="1.2" fill="#c8814a"/><rect x="82" y="209" width="8" height="1.2" fill="#6fb3a0"/><rect x="91" y="209" width="5" height="1.2" fill="#c8814a"/><rect x="18" y="211" width="5" height="1.2" fill="#6fb3a0"/><rect x="24" y="211" width="8" height="1.2" fill="#c8814a"/><rect x="33" y="211" width="8" height="1.2" fill="#6fb3a0"/><rect x="42" y="211" width="7" height="1.2" fill="#c8814a"/><rect x="50" y="211" width="6" height="1.2" fill="#6fb3a0"/><rect x="57" y="211" width="6" height="1.2" fill="#c8814a"/><rect x="22" y="213" width="4" height="1.2" fill="#5f93ad"/><rect x="27" y="213" width="5" height="1.2" fill="#6fb3a0"/><rect x="33" y="213" width="7" height="1.2" fill="#c8814a"/><rect x="26" y="215" width="5" height="1.2" fill="#5f93ad"/><rect x="32" y="215" width="4" height="1.2" fill="#6fb3a0"/><rect x="37" y="215" width="11" height="1.2" fill="#c8814a"/><rect x="49" y="215" width="13" height="1.2" fill="#d6d6da"/><rect x="63" y="215" width="6" height="1.2" fill="#5f93ad"/><rect x="26" y="217" width="5" height="1.2" fill="#5f93ad"/><rect x="32" y="217" width="5" height="1.2" fill="#6fb3a0"/><rect x="38" y="217" width="11" height="1.2" fill="#c8814a"/><rect x="50" y="217" width="8" height="1.2" fill="#6fb3a0"/><rect x="59" y="217" width="12" height="1.2" fill="#c8814a"/><rect x="72" y="217" width="7" height="1.2" fill="#6fb3a0"/><rect x="80" y="217" width="12" height="1.2" fill="#c8814a"/><rect x="26" y="219" width="6" height="1.2" fill="#6fb3a0"/><rect x="33" y="219" width="13" height="1.2" fill="#c8814a"/><rect x="47" y="219" width="9" height="1.2" fill="#6fb3a0"/><rect x="57" y="219" width="12" height="1.2" fill="#c8814a"/><rect x="22" y="221" width="6" height="1.2" fill="#5f93ad"/><rect x="22" y="223" width="4" height="1.2" fill="#5f93ad"/><rect x="27" y="223" width="6" height="1.2" fill="#6fb3a0"/><rect x="34" y="223" width="15" height="1.2" fill="#c8814a"/><rect x="26" y="225" width="5" height="1.2" fill="#5f93ad"/><rect x="32" y="225" width="4" height="1.2" fill="#6fb3a0"/><rect x="37" y="225" width="9" height="1.2" fill="#c8814a"/><rect x="47" y="225" width="12" height="1.2" fill="#d6d6da"/><rect x="60" y="225" width="6" height="1.2" fill="#5f93ad"/><rect x="26" y="227" width="5" height="1.2" fill="#5f93ad"/><rect x="32" y="227" width="6" height="1.2" fill="#6fb3a0"/><rect x="39" y="227" width="12" height="1.2" fill="#c8814a"/><rect x="52" y="227" width="4" height="1.2" fill="#6fb3a0"/><rect x="57" y="227" width="11" height="1.2" fill="#c8814a"/><rect x="69" y="227" width="6" height="1.2" fill="#6fb3a0"/><rect x="76" y="227" width="13" height="1.2" fill="#c8814a"/><rect x="26" y="229" width="7" height="1.2" fill="#6fb3a0"/><rect x="34" y="229" width="6" height="1.2" fill="#c8814a"/><rect x="41" y="229" width="4" height="1.2" fill="#6fb3a0"/><rect x="46" y="229" width="15" height="1.2" fill="#c8814a"/><rect x="22" y="231" width="6" height="1.2" fill="#5f93ad"/><rect x="22" y="233" width="4" height="1.2" fill="#5f93ad"/><rect x="27" y="233" width="5" height="1.2" fill="#6fb3a0"/><rect x="33" y="233" width="6" height="1.2" fill="#c8814a"/><rect x="26" y="235" width="5" height="1.2" fill="#5f93ad"/><rect x="32" y="235" width="4" height="1.2" fill="#6fb3a0"/><rect x="37" y="235" width="10" height="1.2" fill="#c8814a"/><rect x="48" y="235" width="10" height="1.2" fill="#d6d6da"/><rect x="59" y="235" width="6" height="1.2" fill="#5f93ad"/><rect x="26" y="237" width="5" height="1.2" fill="#5f93ad"/><rect x="32" y="237" width="7" height="1.2" fill="#6fb3a0"/><rect x="40" y="237" width="14" height="1.2" fill="#c8814a"/><rect x="55" y="237" width="8" height="1.2" fill="#6fb3a0"/><rect x="64" y="237" width="10" height="1.2" fill="#c8814a"/><rect x="26" y="239" width="4" height="1.2" fill="#6fb3a0"/><rect x="31" y="239" width="9" height="1.2" fill="#c8814a"/><rect x="41" y="239" width="7" height="1.2" fill="#6fb3a0"/><rect x="49" y="239" width="10" height="1.2" fill="#c8814a"/><rect x="60" y="239" width="5" height="1.2" fill="#6fb3a0"/><rect x="66" y="239" width="10" height="1.2" fill="#c8814a"/><rect x="77" y="239" width="6" height="1.2" fill="#6fb3a0"/><rect x="84" y="239" width="12" height="1.2" fill="#c8814a"/><rect x="22" y="241" width="7" height="1.2" fill="#5f93ad"/><rect x="22" y="243" width="4" height="1.2" fill="#5f93ad"/><rect x="27" y="243" width="6" height="1.2" fill="#6fb3a0"/><rect x="34" y="243" width="16" height="1.2" fill="#c8814a"/><rect x="26" y="245" width="5" height="1.2" fill="#5f93ad"/><rect x="32" y="245" width="4" height="1.2" fill="#6fb3a0"/><rect x="37" y="245" width="7" height="1.2" fill="#c8814a"/><rect x="45" y="245" width="9" height="1.2" fill="#d6d6da"/><rect x="55" y="245" width="6" height="1.2" fill="#5f93ad"/><rect x="26" y="247" width="5" height="1.2" fill="#5f93ad"/><rect x="32" y="247" width="6" height="1.2" fill="#6fb3a0"/><rect x="39" y="247" width="10" height="1.2" fill="#c8814a"/><rect x="50" y="247" width="8" height="1.2" fill="#6fb3a0"/><rect x="59" y="247" width="11" height="1.2" fill="#c8814a"/><rect x="71" y="247" width="8" height="1.2" fill="#6fb3a0"/><rect x="80" y="247" width="10" height="1.2" fill="#c8814a"/><rect x="26" y="249" width="7" height="1.2" fill="#6fb3a0"/><rect x="34" y="249" width="11" height="1.2" fill="#c8814a"/><rect x="22" y="251" width="6" height="1.2" fill="#5f93ad"/><rect x="22" y="254" width="4" height="1.2" fill="#5f93ad"/><rect x="27" y="254" width="6" height="1.2" fill="#6fb3a0"/><rect x="34" y="254" width="15" height="1.2" fill="#c8814a"/><rect x="26" y="256" width="5" height="1.2" fill="#5f93ad"/><rect x="32" y="256" width="4" height="1.2" fill="#6fb3a0"/><rect x="37" y="256" width="7" height="1.2" fill="#c8814a"/><rect x="45" y="256" width="10" height="1.2" fill="#d6d6da"/><rect x="56" y="256" width="6" height="1.2" fill="#5f93ad"/><rect x="26" y="258" width="5" height="1.2" fill="#5f93ad"/><rect x="32" y="258" width="6" height="1.2" fill="#6fb3a0"/><rect x="39" y="258" width="14" height="1.2" fill="#c8814a"/><rect x="54" y="258" width="7" height="1.2" fill="#6fb3a0"/><rect x="62" y="258" width="16" height="1.2" fill="#c8814a"/><rect x="26" y="260" width="4" height="1.2" fill="#6fb3a0"/><rect x="31" y="260" width="12" height="1.2" fill="#c8814a"/><rect x="44" y="260" width="7" height="1.2" fill="#6fb3a0"/><rect x="52" y="260" width="15" height="1.2" fill="#c8814a"/><rect x="22" y="262" width="7" height="1.2" fill="#5f93ad"/><rect x="22" y="265" width="4" height="1.2" fill="#5f93ad"/><rect x="27" y="265" width="6" height="1.2" fill="#6fb3a0"/><rect x="34" y="265" width="16" height="1.2" fill="#c8814a"/><rect x="26" y="267" width="5" height="1.2" fill="#5f93ad"/><rect x="32" y="267" width="4" height="1.2" fill="#6fb3a0"/><rect x="37" y="267" width="10" height="1.2" fill="#c8814a"/><rect x="48" y="267" width="15" height="1.2" fill="#d6d6da"/><rect x="64" y="267" width="6" height="1.2" fill="#5f93ad"/><rect x="26" y="269" width="5" height="1.2" fill="#5f93ad"/><rect x="32" y="269" width="7" height="1.2" fill="#6fb3a0"/><rect x="40" y="269" width="16" height="1.2" fill="#c8814a"/><rect x="57" y="269" width="5" height="1.2" fill="#6fb3a0"/><rect x="63" y="269" width="10" height="1.2" fill="#c8814a"/><rect x="74" y="269" width="7" height="1.2" fill="#6fb3a0"/><rect x="82" y="269" width="7" height="1.2" fill="#c8814a"/><rect x="26" y="271" width="9" height="1.2" fill="#6fb3a0"/><rect x="36" y="271" width="12" height="1.2" fill="#c8814a"/><rect x="49" y="271" width="8" height="1.2" fill="#6fb3a0"/><rect x="58" y="271" width="10" height="1.2" fill="#c8814a"/><rect x="22" y="273" width="7" height="1.2" fill="#5f93ad"/><rect x="22" y="275" width="4" height="1.2" fill="#5f93ad"/><rect x="27" y="275" width="5" height="1.2" fill="#6fb3a0"/><rect x="33" y="275" width="8" height="1.2" fill="#c8814a"/><rect x="26" y="277" width="5" height="1.2" fill="#5f93ad"/><rect x="32" y="277" width="4" height="1.2" fill="#6fb3a0"/><rect x="37" y="277" width="10" height="1.2" fill="#c8814a"/><rect x="48" y="277" width="10" height="1.2" fill="#d6d6da"/><rect x="59" y="277" width="6" height="1.2" fill="#5f93ad"/><rect x="26" y="279" width="5" height="1.2" fill="#5f93ad"/><rect x="32" y="279" width="7" height="1.2" fill="#6fb3a0"/><rect x="40" y="279" width="11" height="1.2" fill="#c8814a"/><rect x="52" y="279" width="8" height="1.2" fill="#6fb3a0"/><rect x="61" y="279" width="8" height="1.2" fill="#c8814a"/><rect x="70" y="279" width="7" height="1.2" fill="#6fb3a0"/><rect x="78" y="279" width="15" height="1.2" fill="#c8814a"/><rect x="26" y="281" width="4" height="1.2" fill="#6fb3a0"/><rect x="31" y="281" width="9" height="1.2" fill="#c8814a"/><rect x="41" y="281" width="6" height="1.2" fill="#6fb3a0"/><rect x="48" y="281" width="7" height="1.2" fill="#c8814a"/><rect x="56" y="281" width="4" height="1.2" fill="#6fb3a0"/><rect x="61" y="281" width="6" height="1.2" fill="#c8814a"/><rect x="22" y="283" width="6" height="1.2" fill="#5f93ad"/><rect x="22" y="286" width="4" height="1.2" fill="#5f93ad"/><rect x="27" y="286" width="5" height="1.2" fill="#6fb3a0"/><rect x="33" y="286" width="7" height="1.2" fill="#c8814a"/><rect x="26" y="288" width="5" height="1.2" fill="#5f93ad"/><rect x="32" y="288" width="4" height="1.2" fill="#6fb3a0"/><rect x="37" y="288" width="10" height="1.2" fill="#c8814a"/><rect x="48" y="288" width="14" height="1.2" fill="#d6d6da"/><rect x="63" y="288" width="6" height="1.2" fill="#5f93ad"/><rect x="26" y="290" width="5" height="1.2" fill="#5f93ad"/><rect x="32" y="290" width="4" height="1.2" fill="#6fb3a0"/><rect x="37" y="290" width="7" height="1.2" fill="#c8814a"/><rect x="45" y="290" width="5" height="1.2" fill="#6fb3a0"/><rect x="51" y="290" width="15" height="1.2" fill="#c8814a"/><rect x="67" y="290" width="4" height="1.2" fill="#6fb3a0"/><rect x="72" y="290" width="8" height="1.2" fill="#c8814a"/><rect x="26" y="292" width="5" height="1.2" fill="#6fb3a0"/><rect x="32" y="292" width="8" height="1.2" fill="#c8814a"/><rect x="41" y="292" width="8" height="1.2" fill="#6fb3a0"/><rect x="50" y="292" width="8" height="1.2" fill="#c8814a"/><rect x="22" y="294" width="6" height="1.2" fill="#5f93ad"/><rect x="22" y="296" width="4" height="1.2" fill="#5f93ad"/><rect x="27" y="296" width="4" height="1.2" fill="#6fb3a0"/><rect x="32" y="296" width="15" height="1.2" fill="#c8814a"/><rect x="26" y="298" width="5" height="1.2" fill="#5f93ad"/><rect x="32" y="298" width="4" height="1.2" fill="#6fb3a0"/><rect x="37" y="298" width="7" height="1.2" fill="#c8814a"/><rect x="45" y="298" width="11" height="1.2" fill="#d6d6da"/><rect x="57" y="298" width="6" height="1.2" fill="#5f93ad"/><rect x="26" y="300" width="5" height="1.2" fill="#5f93ad"/><rect x="32" y="300" width="4" height="1.2" fill="#6fb3a0"/><rect x="37" y="300" width="16" height="1.2" fill="#c8814a"/><rect x="54" y="300" width="7" height="1.2" fill="#6fb3a0"/><rect x="62" y="300" width="7" height="1.2" fill="#c8814a"/><rect x="70" y="300" width="6" height="1.2" fill="#6fb3a0"/><rect x="77" y="300" width="6" height="1.2" fill="#c8814a"/><rect x="26" y="302" width="9" height="1.2" fill="#6fb3a0"/><rect x="36" y="302" width="12" height="1.2" fill="#c8814a"/><rect x="49" y="302" width="8" height="1.2" fill="#6fb3a0"/><rect x="58" y="302" width="8" height="1.2" fill="#c8814a"/><rect x="67" y="302" width="4" height="1.2" fill="#6fb3a0"/><rect x="72" y="302" width="12" height="1.2" fill="#c8814a"/><rect x="22" y="304" width="5" height="1.2" fill="#5f93ad"/><rect x="22" y="306" width="4" height="1.2" fill="#5f93ad"/><rect x="27" y="306" width="6" height="1.2" fill="#6fb3a0"/><rect x="34" y="306" width="15" height="1.2" fill="#c8814a"/><rect x="26" y="308" width="5" height="1.2" fill="#5f93ad"/><rect x="32" y="308" width="4" height="1.2" fill="#6fb3a0"/><rect x="37" y="308" width="10" height="1.2" fill="#c8814a"/><rect x="48" y="308" width="15" height="1.2" fill="#d6d6da"/><rect x="64" y="308" width="6" height="1.2" fill="#5f93ad"/><rect x="26" y="310" width="5" height="1.2" fill="#5f93ad"/><rect x="32" y="310" width="6" height="1.2" fill="#6fb3a0"/><rect x="39" y="310" width="6" height="1.2" fill="#c8814a"/><rect x="46" y="310" width="5" height="1.2" fill="#6fb3a0"/><rect x="52" y="310" width="10" height="1.2" fill="#c8814a"/><rect x="63" y="310" width="5" height="1.2" fill="#6fb3a0"/><rect x="69" y="310" width="15" height="1.2" fill="#c8814a"/><rect x="26" y="312" width="8" height="1.2" fill="#6fb3a0"/><rect x="35" y="312" width="14" height="1.2" fill="#c8814a"/><rect x="50" y="312" width="8" height="1.2" fill="#6fb3a0"/><rect x="59" y="312" width="9" height="1.2" fill="#c8814a"/><rect x="22" y="314" width="6" height="1.2" fill="#5f93ad"/><rect x="22" y="316" width="4" height="1.2" fill="#5f93ad"/><rect x="27" y="316" width="6" height="1.2" fill="#6fb3a0"/><rect x="34" y="316" width="9" height="1.2" fill="#c8814a"/><rect x="26" y="318" width="5" height="1.2" fill="#5f93ad"/><rect x="32" y="318" width="4" height="1.2" fill="#6fb3a0"/><rect x="37" y="318" width="9" height="1.2" fill="#c8814a"/><rect x="47" y="318" width="12" height="1.2" fill="#d6d6da"/><rect x="60" y="318" width="6" height="1.2" fill="#5f93ad"/><rect x="26" y="320" width="5" height="1.2" fill="#5f93ad"/><rect x="32" y="320" width="5" height="1.2" fill="#6fb3a0"/><rect x="38" y="320" width="9" height="1.2" fill="#c8814a"/><rect x="48" y="320" width="6" height="1.2" fill="#6fb3a0"/><rect x="55" y="320" width="13" height="1.2" fill="#c8814a"/><rect x="69" y="320" width="7" height="1.2" fill="#6fb3a0"/><rect x="77" y="320" width="8" height="1.2" fill="#c8814a"/><rect x="26" y="322" width="9" height="1.2" fill="#6fb3a0"/><rect x="36" y="322" width="11" height="1.2" fill="#c8814a"/><rect x="48" y="322" width="4" height="1.2" fill="#6fb3a0"/><rect x="53" y="322" width="15" height="1.2" fill="#c8814a"/><rect x="22" y="324" width="7" height="1.2" fill="#5f93ad"/><rect x="22" y="326" width="4" height="1.2" fill="#5f93ad"/><rect x="27" y="326" width="4" height="1.2" fill="#6fb3a0"/><rect x="32" y="326" width="7" height="1.2" fill="#c8814a"/><rect x="26" y="328" width="5" height="1.2" fill="#5f93ad"/><rect x="32" y="328" width="4" height="1.2" fill="#6fb3a0"/><rect x="37" y="328" width="11" height="1.2" fill="#c8814a"/><rect x="49" y="328" width="16" height="1.2" fill="#d6d6da"/><rect x="66" y="328" width="6" height="1.2" fill="#5f93ad"/><rect x="26" y="330" width="5" height="1.2" fill="#5f93ad"/><rect x="32" y="330" width="5" height="1.2" fill="#6fb3a0"/><rect x="38" y="330" width="12" height="1.2" fill="#c8814a"/><rect x="51" y="330" width="7" height="1.2" fill="#6fb3a0"/><rect x="59" y="330" width="13" height="1.2" fill="#c8814a"/><rect x="73" y="330" width="6" height="1.2" fill="#6fb3a0"/><rect x="80" y="330" width="7" height="1.2" fill="#c8814a"/><rect x="26" y="332" width="8" height="1.2" fill="#6fb3a0"/><rect x="35" y="332" width="12" height="1.2" fill="#c8814a"/><rect x="22" y="334" width="5" height="1.2" fill="#5f93ad"/><rect x="22" y="336" width="4" height="1.2" fill="#5f93ad"/><rect x="27" y="336" width="5" height="1.2" fill="#6fb3a0"/><rect x="33" y="336" width="16" height="1.2" fill="#c8814a"/><rect x="26" y="338" width="5" height="1.2" fill="#5f93ad"/><rect x="32" y="338" width="4" height="1.2" fill="#6fb3a0"/><rect x="37" y="338" width="7" height="1.2" fill="#c8814a"/><rect x="45" y="338" width="11" height="1.2" fill="#d6d6da"/><rect x="57" y="338" width="6" height="1.2" fill="#5f93ad"/><rect x="26" y="340" width="5" height="1.2" fill="#5f93ad"/><rect x="32" y="340" width="7" height="1.2" fill="#6fb3a0"/><rect x="40" y="340" width="9" height="1.2" fill="#c8814a"/><rect x="50" y="340" width="5" height="1.2" fill="#6fb3a0"/><rect x="56" y="340" width="15" height="1.2" fill="#c8814a"/><rect x="72" y="340" width="7" height="1.2" fill="#6fb3a0"/><rect x="80" y="340" width="11" height="1.2" fill="#c8814a"/><rect x="26" y="342" width="6" height="1.2" fill="#6fb3a0"/><rect x="33" y="342" width="15" height="1.2" fill="#c8814a"/><rect x="49" y="342" width="9" height="1.2" fill="#6fb3a0"/><rect x="59" y="342" width="11" height="1.2" fill="#c8814a"/><rect x="22" y="344" width="6" height="1.2" fill="#5f93ad"/><rect x="20" y="346" width="5" height="1.2" fill="#5f93ad"/><rect x="16" y="348" width="7" height="1.2" fill="#5f93ad"/><rect x="16" y="350" width="4" height="1.2" fill="#5f93ad"/><rect x="21" y="350" width="5" height="1.2" fill="#6fb3a0"/><rect x="27" y="350" width="16" height="1.2" fill="#c8814a"/><rect x="20" y="352" width="5" height="1.2" fill="#5f93ad"/><rect x="26" y="352" width="6" height="1.2" fill="#6fb3a0"/><rect x="33" y="352" width="16" height="1.2" fill="#c8814a"/><rect x="50" y="352" width="7" height="1.2" fill="#6fb3a0"/><rect x="58" y="352" width="11" height="1.2" fill="#c8814a"/><rect x="20" y="354" width="8" height="1.2" fill="#6fb3a0"/><rect x="29" y="354" width="6" height="1.2" fill="#c8814a"/><rect x="36" y="354" width="8" height="1.2" fill="#6fb3a0"/><rect x="45" y="354" width="15" height="1.2" fill="#c8814a"/><rect x="20" y="356" width="5" height="1.2" fill="#5f93ad"/><rect x="26" y="356" width="5" height="1.2" fill="#6fb3a0"/><rect x="32" y="356" width="8" height="1.2" fill="#c8814a"/><rect x="41" y="356" width="7" height="1.2" fill="#6fb3a0"/><rect x="49" y="356" width="7" height="1.2" fill="#c8814a"/><rect x="57" y="356" width="4" height="1.2" fill="#6fb3a0"/><rect x="62" y="356" width="6" height="1.2" fill="#c8814a"/><rect x="69" y="356" width="4" height="1.2" fill="#6fb3a0"/><rect x="74" y="356" width="8" height="1.2" fill="#c8814a"/><rect x="83" y="356" width="5" height="1.2" fill="#6fb3a0"/><rect x="89" y="356" width="7" height="1.2" fill="#c8814a"/><rect x="20" y="358" width="3" height="1.2" fill="#d6d6da"/><rect x="24" y="358" width="8" height="1.2" fill="#d6d6da"/><rect x="33" y="358" width="6" height="1.2" fill="#5f93ad"/><rect x="16" y="360" width="5" height="1.2" fill="#5f93ad"/><rect x="11" y="362" width="6" height="1.2" fill="#5f93ad"/><rect x="7" y="364" width="6" height="1.2" fill="#5f93ad"/><rect x="2" y="366" width="7" height="1.2" fill="#5f93ad"/><rect x="2" y="368" width="5" height="1.2" fill="#5f93ad"/><rect x="8" y="368" width="5" height="1.2" fill="#6fb3a0"/><rect x="14" y="368" width="10" height="1.2" fill="#c8814a"/><rect x="25" y="368" width="8" height="1.2" fill="#6fb3a0"/><rect x="34" y="368" width="11" height="1.2" fill="#c8814a"/></g></svg>
<i class="vl" style="left:968px;background:#2b2d39"></i>
<i class="abs" style="left:969px;top:351px;width:13px;height:2px;background:#d8d8e0"></i>
</div>
<div id="panel" class="abs">
<div class="selrow" style="top:234px"></div>
<svg class="abs" style="left:0;top:0" width="451" height="300" viewBox="0 0 451 300"><path d="M4.1 10.4L9.4 16.0L14.7 10.4" fill="none" stroke="#dcdce4" stroke-width="1.4"/><g transform="translate(24.7 4.9)"><path d="M8.7 0.2L17.2 3.5V13.3L8.7 17.3L0.2 13.3V3.5Z" fill="#6da39b" stroke="#6da39b" stroke-width="0.6" stroke-linejoin="round"/><path d="M8.7 2.1L14.3 4.3L8.7 6.6L3.1 4.3Z" fill="#161722"/><path d="M9.9 8.8L15.4 6.5V12.2L9.9 14.9Z" fill="#161722"/></g><g transform="translate(38 31)"><path d="M0.1 3.2A7.8 3.1 0 0 1 15.7 3.2V14.5A7.8 3.1 0 0 1 0.1 14.5Z" fill="#6da39b"/><path d="M0.1 6.1Q7.9 10.6 15.7 6.1M0.1 11.4Q7.9 15.9 15.7 11.4" fill="none" stroke="#161722" stroke-width="1.3"/></g><g transform="translate(36.8 56.8)"><path d="M8.7 0.2L17.2 3.5V13.3L8.7 17.3L0.2 13.3V3.5Z" fill="#6da39b" stroke="#6da39b" stroke-width="0.6" stroke-linejoin="round"/><path d="M8.7 2.1L14.3 4.3L8.7 6.6L3.1 4.3Z" fill="#161722"/><path d="M9.9 8.8L15.4 6.5V12.2L9.9 14.9Z" fill="#161722"/></g><path d="M18.2 86.4L24.2 91.6L18.2 96.8" fill="none" stroke="#8e8e9a" stroke-width="1.4"/><rect x="37.9" y="83.9" width="15.4" height="15.4" rx="1.6" fill="#5f8ba4"/><path d="M16.1 114.6L21.4 120.2L26.7 114.6" fill="none" stroke="#dcdce4" stroke-width="1.4"/><g transform="translate(37 108.6)"><path d="M5 0.7H15A1.8 1.8 0 0 1 16.8 2.5V11A1.8 1.8 0 0 1 15 12.8H5A1.8 1.8 0 0 1 3.2 11V2.5A1.8 1.8 0 0 1 5 0.7Z" fill="#cfa86c"/><rect x="0.2" y="4.2" width="13.2" height="13" rx="1.8" fill="#cfa86c" stroke="#161722" stroke-width="1.2"/><rect x="2.2" y="6.6" width="9.2" height="1.6" fill="#161722"/></g><path d="M30.1 138.4L36.1 143.6L30.1 148.8" fill="none" stroke="#8e8e9a" stroke-width="1.4"/><rect x="49" y="146.4" width="17" height="4.7" rx="2.2" fill="#cfa86c"/><path d="M30.1 164.4L36.1 169.6L30.1 174.8" fill="none" stroke="#8e8e9a" stroke-width="1.4"/><rect x="50" y="162.8" width="15" height="1.9" rx="0.5" fill="#cfa86c"/><rect x="50" y="166.9" width="15" height="1.9" rx="0.5" fill="#cfa86c"/><rect x="50" y="171.0" width="15" height="1.9" rx="0.5" fill="#cfa86c"/><rect x="50" y="175.1" width="15" height="1.9" rx="0.5" fill="#cfa86c"/><path d="M28.1 192.6L33.4 198.2L38.7 192.6" fill="none" stroke="#dcdce4" stroke-width="1.4"/><rect x="49" y="198.4" width="17" height="4.7" rx="2.2" fill="#cfa86c"/><rect x="62" y="214" width="15" height="15" rx="1.6" fill="#6b9790"/><rect x="62" y="240" width="15" height="15" rx="1.6" fill="#ffffff"/></svg>
<div class="tr" style="top:1px;left:49px">App</div>
<div class="tr" style="top:27px;left:61px">Server Connect: <b style="letter-spacing:-0.17px">serverconnectSecretKey</b></div>
<div class="tr" style="top:53px;left:61px">Variable: <b style="letter-spacing:0px">varTotal</b></div>
<div class="tr" style="top:79px;left:61px">Container</div>
<div class="tr" style="top:105px;left:61px;letter-spacing:0.18px">Dynamic Modal: <b style="letter-spacing:0px">modalRegister</b></div>
<div class="tr" style="top:131px;left:73.5px;letter-spacing:0.22px">Modal Header</div>
<div class="tr" style="top:157px;left:73.5px;letter-spacing:0.26px">Modal Body</div>
<div class="tr" style="top:183px;left:73.5px;letter-spacing:0.26px">Modal Footer</div>
<div class="tr" style="top:209px;left:85.5px;letter-spacing:0.28px">Button</div>
<div class="tr" style="top:235px;left:85.5px;letter-spacing:0.28px;color:#fff">Button</div>
<div class="ph" style="top:519px"><span style="left:4.5px">Properties</span><span class="tg" style="left:305px;color:#3f8ff2">General</span><span class="ta" style="left:364px">Attributes</span><span class="ta" style="left:435.3px">Events</span></div>
<i class="hl" style="left:10px;top:560px;width:10px"></i><div class="sh" style="left:30px;top:550.5px;letter-spacing:0.68px">CSS VARIABLES</div><i class="hl" style="left:164px;top:560px;width:211px"></i>
<i class="hl" style="left:10px;top:611px;width:10px"></i><div class="sh" style="left:30px;top:601.5px;letter-spacing:1.12px">DYNAMIC ATTRIBUTES</div><i class="hl" style="left:220px;top:611px;width:155px"></i>
<i class="hl" style="left:10px;top:662px;width:10px"></i><div class="sh" style="left:30px;top:652.5px;letter-spacing:1.16px">DYNAMIC EVENTS</div><i class="hl" style="left:185px;top:662px;width:190px"></i>
<div class="bdg" style="left:54px;top:690px;width:37px;height:22px;line-height:25px;font-size:14px;padding-left:4px">Click</div>
<div class="bdg" style="left:58px;top:725px;width:45px;height:21px;line-height:24px;font-size:13.5px;padding-left:4px">Action</div>
<div class="abs inf" style="left:109.4px;top:727.5px">i</div>
<div class="pill" style="left:131px;top:724px"><em>ƒ</em>frmRegister</div>
<i class="hl" style="left:127px;top:754px;width:218px;background:#50525e"></i>
<div class="abs brc" style="left:349px;top:727px">{</div><div class="abs brc" style="left:367px;top:727px">}</div>
<div class="abs mod" style="left:40px;top:766px">Modifiers</div>
<i class="hl" style="left:107px;top:789px;width:292px;background:#50525e"></i>
<svg class="abs" style="left:0;top:0;z-index:3" width="451" height="826" viewBox="0 0 451 826"><circle cx="388" cy="558.5" r="11.4" fill="#161722" stroke="#d2d2da" stroke-width="1.05"/><path d="M383.2 558.8H392.8M388 554.0V563.6" stroke="#d8d8e0" stroke-width="1.25"/><circle cx="388" cy="609.5" r="11.4" fill="#161722" stroke="#d2d2da" stroke-width="1.05"/><path d="M383.2 609.8H392.8M388 605.0V614.6" stroke="#d8d8e0" stroke-width="1.25"/><circle cx="388" cy="660.5" r="11.4" fill="#161722" stroke="#d2d2da" stroke-width="1.05"/><path d="M383.2 660.8H392.8M388 656.0V665.6" stroke="#d8d8e0" stroke-width="1.25"/><circle cx="388" cy="831" r="11.4" fill="#161722" stroke="#d2d2da" stroke-width="1.05"/><path d="M383.2 831.3H392.8M388 826.5V836.1" stroke="#d8d8e0" stroke-width="1.25"/><rect x="30" y="693" width="16" height="16" rx="3.2" fill="#409cf6"/><path d="M34.6 701.3L36.9 703.5L41 698.8" fill="none" stroke="#fff" stroke-width="1.8" stroke-linecap="round" stroke-linejoin="round"/><rect x="109.4" y="727.5" width="13.6" height="13.2" rx="1" fill="none" stroke="#dcdce4" stroke-width="1.1"/><path d="M359 730.2L366.2 736.7L359 743.2Z" fill="#e9a25d"/><g fill="#e9a25d"><rect x="377" y="729" width="6.2" height="6.2" rx="0.8"/><rect x="391" y="729" width="6.2" height="6.2" rx="0.8"/><rect x="384" y="739" width="6.2" height="6.2" rx="0.8"/></g><path d="M382 732H392M381 733L385.5 740" stroke="#e9a25d" stroke-width="1.5" fill="none"/><path d="M386.4 770.2L390.7 774.4L395 770.2" fill="none" stroke="#e4e4ea" stroke-width="1.5"/><path d="M169.3 702.7Q179 716 191.6 726.6Q197 695 208.5 681.5" fill="none" stroke="#f41818" stroke-width="2.1" stroke-linecap="round" stroke-linejoin="round"/></svg>
</div>
</body>
</html>
